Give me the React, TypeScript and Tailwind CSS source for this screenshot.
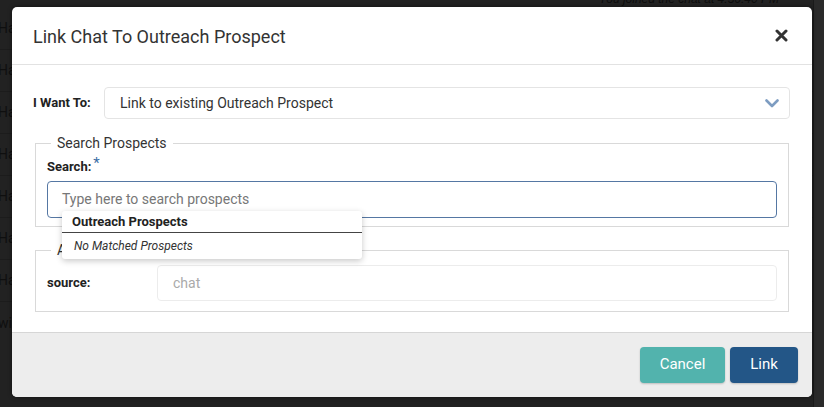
import React from "react";

const rows = ["Ha", "Ha", "Ha", "Ha", "Ha", "Ha", "Ha"];

function CloseIcon() {
  return (
    <svg width="13" height="13" viewBox="0 0 13 13">
      <path d="M2 2 L11 11 M11 2 L2 11" stroke="#333" strokeWidth="3" strokeLinecap="round" />
    </svg>
  );
}

function Chevron() {
  return (
    <svg width="14" height="9" viewBox="0 0 14 9">
      <path d="M1.5 1.5 L7 7 L12.5 1.5" stroke="#7d9cc1" strokeWidth="2.6" fill="none" strokeLinecap="round" strokeLinejoin="round" />
    </svg>
  );
}

export default function App() {
  return (
    <div className="relative w-[824px] h-[407px] overflow-hidden bg-[#222222] font-['Roboto',sans-serif]">
      {/* chat behind the modal */}
      <div className="flex h-full">
        <div className="flex-1 flex flex-col">
          <div className="h-[8px] flex justify-end pr-[34px]">
            <span className="-mt-[10px] text-[12px] italic text-[#0d0d0d] font-['Liberation_Sans',sans-serif]">
              You joined the chat at 4:36:40 PM
            </span>
          </div>
          {rows.map((r, i) => (
            <div key={i} className="h-[42px] flex items-center border-b border-[#1c1c1c] text-[14px] text-[#0f0f0f] -ml-[2px]">
              {r}
            </div>
          ))}
          <div className="h-[42px] flex items-center text-[14px] text-[#0f0f0f] -ml-[2px]">wi</div>
        </div>
        <div className="w-[11px] bg-[#2a2a2a] border-l border-[#1a1a1a]" />
      </div>

      {/* modal */}
      <div className="absolute left-[12px] top-[7px] w-[800px] h-[390px] bg-white rounded-[5px] flex flex-col overflow-hidden shadow-[0_0_4px_rgba(0,0,0,0.5)]">
        <div className="h-[58px] shrink-0 flex items-center justify-between pl-[21px] pr-[24px] border-b border-[#e2e2e2]">
          <h1 className="text-[18px] text-[#333] pt-[1px]">Link Chat To Outreach Prospect</h1>
          <CloseIcon />
        </div>

        <div className="flex-1 pt-[22px] pl-[21px] pr-[22px]">
          <div className="flex items-center">
            <label className="w-[71px] text-[13px] font-bold text-[#222]">I Want To:</label>
            <div className="flex-1 h-[32px] border border-[#e4e4e4] rounded-[4px] flex items-center justify-between pl-[15px] pr-[10px]">
              <span className="text-[14px] text-[#333]">Link to existing Outreach Prospect</span>
              <Chevron />
            </div>
          </div>

          <fieldset className="relative mt-[14px] ml-[2px] mr-[1px] border border-[#d9d9d9] px-[11px] pb-[8px]">
            <legend className="ml-[4px] px-[6px] text-[14px] leading-[20px] text-[#333]">Search Prospects</legend>
            <div className="mt-[3px] text-[13px] font-bold leading-[20px] text-[#222]">
              Search:<span className="ml-[2px] text-[15px] text-[#3a6ea5] font-normal relative -top-[3px]">*</span>
            </div>
            <div className="mt-[4px] h-[37px] border border-[#5577a3] rounded-[4px] flex items-center pl-[14px]">
              <span className="text-[14px] text-[#777]">Type here to search prospects</span>
            </div>

            <div className="absolute left-[26px] top-[58px] w-[300px] h-[48px] bg-white rounded-[3px] shadow-[0_2px_6px_rgba(0,0,0,0.22)] z-10">
              <div className="h-[22px] flex items-center pl-[10px] border-b border-[#444] text-[13px] font-bold text-[#222]">
                Outreach Prospects
              </div>
              <div className="h-[25px] flex items-center pl-[12px] text-[12px] italic text-[#333]">No Matched Prospects</div>
            </div>
          </fieldset>

          <fieldset className="mt-[13px] ml-[2px] mr-[1px] border border-[#d9d9d9] px-[11px] pb-[10px]">
            <legend className="ml-[4px] px-[6px] text-[14px] leading-[20px] text-[#333]">Additional Data</legend>
            <div className="mt-[5px] flex items-center">
              <label className="w-[110px] text-[13px] font-bold text-[#222]">source:</label>
              <div className="flex-1 h-[36px] border border-[#ececec] rounded-[4px] flex items-center pl-[15px]">
                <span className="text-[14px] text-[#aaa]">chat</span>
              </div>
            </div>
          </fieldset>
        </div>

        <div className="h-[65px] shrink-0 bg-[#ededed] border-t border-[#d6d6d6] flex items-center justify-end gap-[5px] pr-[14px] pb-[1px]">
          <button className="w-[85px] h-[36px] rounded-[4px] bg-[#52b3ad] text-white text-[15px] shadow-[0_1px_2px_rgba(0,0,0,0.2)]">
            Cancel
          </button>
          <button className="w-[68px] h-[36px] rounded-[4px] bg-[#235687] text-white text-[15px] shadow-[0_1px_2px_rgba(0,0,0,0.2)]">
            Link
          </button>
        </div>
      </div>
    </div>
  );
}
